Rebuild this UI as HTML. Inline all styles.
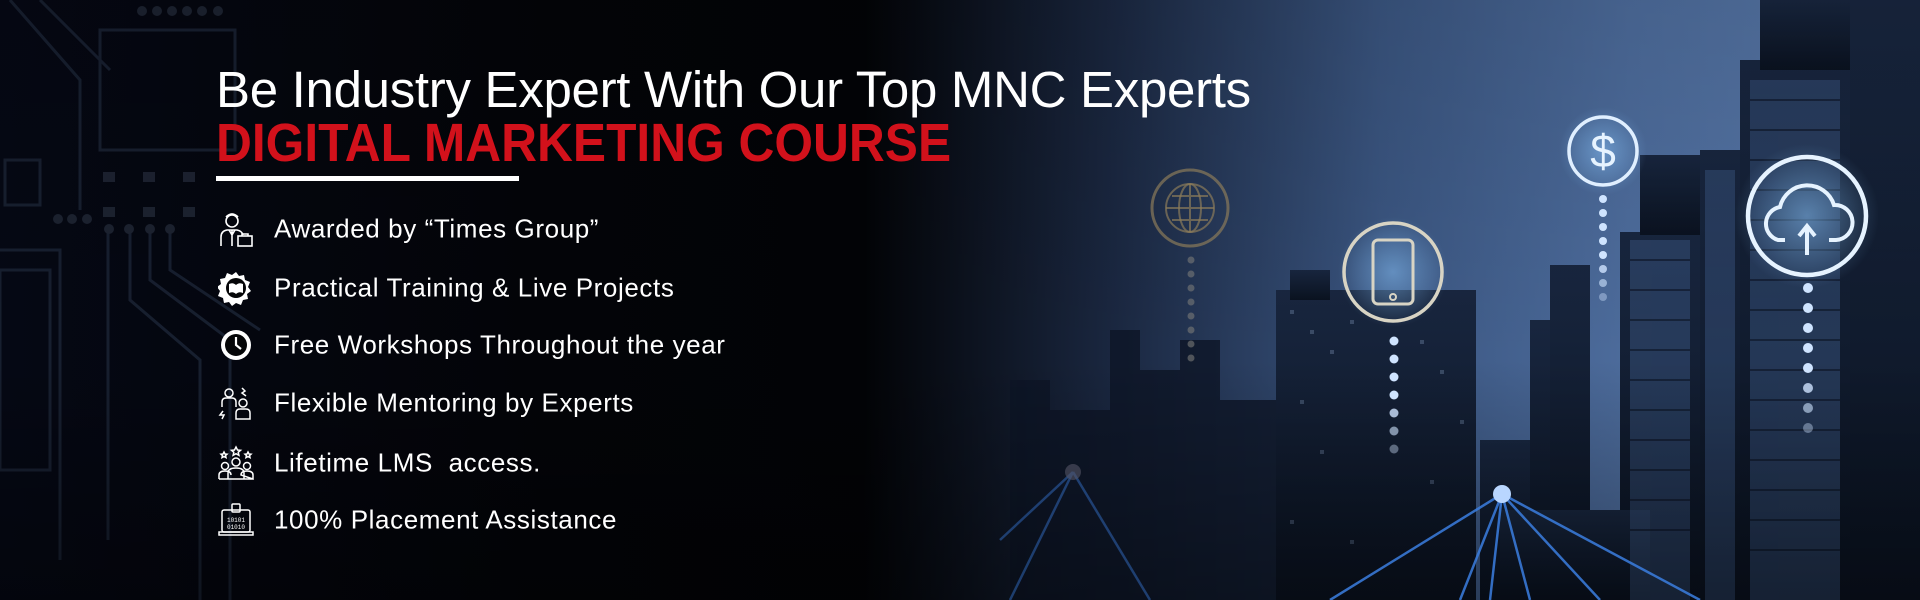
<!DOCTYPE html>
<html><head><meta charset="utf-8"><style>
*{margin:0;padding:0;box-sizing:border-box}
body{width:1920px;height:600px;overflow:hidden;background:#03050b;font-family:"Liberation Sans",sans-serif}
.wrap{position:relative;width:1920px;height:600px;overflow:hidden}
svg.bg{position:absolute;left:0;top:0}
.t1{position:absolute;left:216px;top:60px;color:#fff;font-size:51px;white-space:nowrap;letter-spacing:-0.3px}
.t2{position:absolute;left:216px;top:112px;color:#d2111b;font-size:54px;font-weight:bold;white-space:nowrap;transform:scaleX(0.92);transform-origin:left top}
.bar{position:absolute;left:216px;top:176px;width:303px;height:5px;background:#fff}
.li{position:absolute;left:274px;color:#fff;font-size:26px;white-space:nowrap;letter-spacing:0.6px;transform:translateY(-50%)}
.ic{position:absolute;left:218px;width:36px;height:36px;transform:translateY(-50%)}
</style></head><body><div class="wrap">
<svg class="bg" width="1920" height="600" viewBox="0 0 1920 600">
<defs>
<linearGradient id="sky" x1="0" y1="0" x2="1" y2="0">
<stop offset="0" stop-color="#050814"/>
<stop offset="0.28" stop-color="#030408"/>
<stop offset="0.45" stop-color="#020306"/>
<stop offset="0.58" stop-color="#1a2740"/>
<stop offset="0.72" stop-color="#3a5580"/>
<stop offset="0.85" stop-color="#4d6c9c"/>
<stop offset="1" stop-color="#5a7aaa"/>
</linearGradient>
<linearGradient id="vfade" x1="0" y1="0" x2="0" y2="1">
<stop offset="0" stop-color="#000" stop-opacity="0.1"/>
<stop offset="0.6" stop-color="#000" stop-opacity="0"/>
<stop offset="1" stop-color="#000" stop-opacity="0.35"/>
</linearGradient>
<radialGradient id="glow"><stop offset="0" stop-color="#8cc8ff" stop-opacity="0.5"/><stop offset="1" stop-color="#8cc8ff" stop-opacity="0"/></radialGradient>
<linearGradient id="bld" x1="0" y1="0" x2="0" y2="1"><stop offset="0" stop-color="#18263f"/><stop offset="1" stop-color="#0a1220"/></linearGradient>
</defs>
<rect width="1920" height="600" fill="url(#sky)"/>
<g stroke="#1a2233" stroke-width="3" fill="none" opacity="0.9">
<rect x="100" y="30" width="135" height="120"/>
<path d="M10 0 L80 80 L80 210 M40 0 L110 70 M0 250 L60 250 L60 560 M108 230 L108 540 M130 230 L130 300 L200 360 L200 600 M150 230 L150 280 L230 340 L230 600 M170 230 L170 270 L260 330"/>
<rect x="5" y="160" width="35" height="45"/>
<rect x="0" y="270" width="50" height="200"/>
</g>
<g fill="#1c2230"><rect x="103" y="172" width="12" height="10"/><rect x="143" y="172" width="12" height="10"/><rect x="183" y="172" width="12" height="10"/><rect x="103" y="207" width="12" height="10"/><rect x="143" y="207" width="12" height="10"/><rect x="183" y="207" width="12" height="10"/>
<circle cx="58" cy="219" r="5"/><circle cx="72" cy="219" r="5"/><circle cx="87" cy="219" r="5"/><circle cx="109" cy="229" r="5"/><circle cx="129" cy="229" r="5"/><circle cx="150" cy="229" r="5"/><circle cx="170" cy="229" r="5"/>
<circle cx="142" cy="11" r="5"/><circle cx="157" cy="11" r="5"/><circle cx="172" cy="11" r="5"/><circle cx="187" cy="11" r="5"/><circle cx="202" cy="11" r="5"/><circle cx="218" cy="11" r="5"/></g>
<g fill="#0d1526" opacity="0.8">
<rect x="1010" y="380" width="40" height="220"/><rect x="1050" y="410" width="60" height="190"/><rect x="1110" y="330" width="30" height="270"/>
<rect x="1140" y="370" width="40" height="230"/><rect x="1180" y="340" width="40" height="260"/><rect x="1220" y="400" width="60" height="200"/>
</g>
<g fill="url(#bld)">
<rect x="1276" y="290" width="200" height="310"/>
<rect x="1290" y="270" width="40" height="30"/>
<rect x="1480" y="440" width="60" height="160"/>
<rect x="1530" y="320" width="30" height="280"/>
<rect x="1550" y="265" width="40" height="335"/>
<rect x="1620" y="232" width="80" height="368"/>
<rect x="1640" y="155" width="60" height="80"/>
<rect x="1700" y="150" width="50" height="450"/>
<rect x="1740" y="60" width="110" height="540"/>
<rect x="1760" y="0" width="100" height="70"/>
<rect x="1850" y="0" width="70" height="600"/>
<rect x="1500" y="510" width="150" height="90"/>
</g>
<g fill="#3d5a88" opacity="0.45">
<rect x="1630" y="240" width="60" height="360"/><rect x="1750" y="80" width="90" height="520"/><rect x="1705" y="170" width="30" height="430"/>
</g>
<g fill="#7f96b8" opacity="0.35">
<rect x="1290" y="310" width="4" height="4"/><rect x="1310" y="330" width="4" height="4"/><rect x="1330" y="350" width="4" height="4"/><rect x="1350" y="320" width="4" height="4"/><rect x="1420" y="340" width="4" height="4"/><rect x="1440" y="370" width="4" height="4"/><rect x="1300" y="400" width="4" height="4"/><rect x="1460" y="420" width="4" height="4"/><rect x="1320" y="450" width="4" height="4"/><rect x="1430" y="480" width="4" height="4"/><rect x="1290" y="520" width="4" height="4"/><rect x="1350" y="540" width="4" height="4"/>
</g>
<g stroke="#0c1424" stroke-width="2" opacity="0.6">
<path d="M1750 100 H1840 M1750 130 H1840 M1750 160 H1840 M1750 190 H1840 M1750 220 H1840 M1750 250 H1840 M1750 280 H1840 M1750 310 H1840 M1750 340 H1840 M1750 370 H1840 M1750 400 H1840 M1750 430 H1840 M1750 460 H1840 M1750 490 H1840 M1750 520 H1840 M1750 550 H1840 M1630 260 H1690 M1630 290 H1690 M1630 320 H1690 M1630 350 H1690 M1630 380 H1690 M1630 410 H1690 M1630 440 H1690 M1630 470 H1690 M1630 500 H1690 M1630 530 H1690"/>
</g>
<rect width="1920" height="600" fill="url(#vfade)"/>
<g stroke="#3b7ee0" stroke-width="2.5" opacity="0.85">
<path d="M1502 494 L1330 600 M1502 494 L1460 600 M1502 494 L1490 600 M1502 494 L1530 600 M1502 494 L1600 600 M1502 494 L1700 600"/>
<path d="M1073 472 L1000 540 M1073 472 L1150 600 M1073 472 L1010 600" opacity="0.5"/>
</g>
<circle cx="1502" cy="494" r="9" fill="#b9d6ff"/>
<circle cx="1073" cy="472" r="8" fill="#556" opacity="0.6"/>
<g fill="none">
<circle cx="1190" cy="208" r="38" stroke="#8a7a5a" stroke-width="3" opacity="0.7"/>
<circle cx="1190" cy="208" r="24" stroke="#8a7a5a" stroke-width="2" opacity="0.7"/>
<path d="M1166 208 H1214 M1190 184 V232 M1172 196 H1208 M1172 220 H1208" stroke="#8a7a5a" stroke-width="2" opacity="0.7"/>
<ellipse cx="1190" cy="208" rx="11" ry="24" stroke="#8a7a5a" stroke-width="2" opacity="0.7"/>
<circle cx="1393" cy="272" r="55" fill="url(#glow)"/>
<circle cx="1393" cy="272" r="49" stroke="#d8d4c4" stroke-width="3.5"/>
<rect x="1373" y="240" width="40" height="64" rx="5" stroke="#d8d4c4" stroke-width="3"/>
<circle cx="1393" cy="297" r="3" stroke="#d8d4c4" stroke-width="2"/>
<circle cx="1603" cy="151" r="44" fill="url(#glow)"/>
<circle cx="1603" cy="151" r="34" stroke="#e0efff" stroke-width="3.5"/>
<circle cx="1807" cy="216" r="72" fill="url(#glow)"/>
<circle cx="1807" cy="216" r="59" stroke="#e6f3ff" stroke-width="4.5"/>
<path d="M1785 240 H1778 A17 17 0 0 1 1780 207 A28 28 0 0 1 1834 205 A17 17 0 0 1 1836 240 H1829" stroke="#e6f3ff" stroke-width="4"/>
<path d="M1807 255 V228 M1799 236 L1807 226 L1815 236" stroke="#e6f3ff" stroke-width="4"/>
</g>
<text x="1603" y="167" font-family="Liberation Sans" font-size="46" fill="#e6f3ff" text-anchor="middle">$</text>
<g fill="#7a7a78" opacity="0.6">
<circle cx="1191" cy="260" r="3.5"/><circle cx="1191" cy="274" r="3.5"/><circle cx="1191" cy="288" r="3.5"/><circle cx="1191" cy="302" r="3.5"/><circle cx="1191" cy="316" r="3.5"/><circle cx="1191" cy="330" r="3.5"/><circle cx="1191" cy="344" r="3.5"/><circle cx="1191" cy="358" r="3.5"/>
</g>
<g fill="#cfe4ff">
<circle cx="1394" cy="341" r="4.5"/><circle cx="1394" cy="359" r="4.5"/><circle cx="1394" cy="377" r="4.5"/><circle cx="1394" cy="395" r="4.5"/><circle cx="1394" cy="413" r="4.5" opacity="0.8"/><circle cx="1394" cy="431" r="4.5" opacity="0.6"/><circle cx="1394" cy="449" r="4.5" opacity="0.4"/>
<circle cx="1603" cy="199" r="4"/><circle cx="1603" cy="213" r="4"/><circle cx="1603" cy="227" r="4"/><circle cx="1603" cy="241" r="4"/><circle cx="1603" cy="255" r="4"/><circle cx="1603" cy="269" r="4" opacity="0.8"/><circle cx="1603" cy="283" r="4" opacity="0.6"/><circle cx="1603" cy="297" r="4" opacity="0.4"/>
<circle cx="1808" cy="288" r="5"/><circle cx="1808" cy="308" r="5"/><circle cx="1808" cy="328" r="5"/><circle cx="1808" cy="348" r="5"/><circle cx="1808" cy="368" r="5"/><circle cx="1808" cy="388" r="5" opacity="0.8"/><circle cx="1808" cy="408" r="5" opacity="0.6"/><circle cx="1808" cy="428" r="5" opacity="0.4"/>
</g>
</svg>

<div class="t1">Be Industry Expert With Our Top MNC Experts</div>
<div class="t2">DIGITAL MARKETING COURSE</div>
<div class="bar"></div>

<svg class="ic" style="top:229px" viewBox="0 0 36 36" fill="none" stroke="#fff" stroke-width="1.6"><circle cx="14" cy="10" r="6"/><path d="M8 6 Q14 0 20 6"/><path d="M3 35 V26 Q3 20 9 19 L19 19 Q24 20 25 24 M14 19 V35 M11 19 L14 24 L17 19"/><rect x="20" y="25" width="14" height="10"/><path d="M24 25 V23 H30 V25"/></svg>
<svg class="ic" style="top:288px" viewBox="0 0 36 36" fill="#fff"><path d="M18 2 l3 4 5-1 1 5 5 2-2 5 3 4-4 3 1 5-5 1-2 5-5-2-4 3-3-4-5 1-1-5-5-2 2-5-3-4 4-3-1-5 5-1 2-5 5 2z"/><circle cx="18" cy="18" r="10" fill="#050608"/><path d="M11 14 Q15 12 18 15 Q21 12 25 14 V23 Q21 21 18 24 Q15 21 11 23z" fill="#fff"/></svg>
<svg class="ic" style="top:345px" viewBox="0 0 36 36"><circle cx="18" cy="18" r="15" fill="#fff"/><circle cx="18" cy="18" r="11" fill="#050608"/><path d="M18 10 V18 L23 22" stroke="#fff" stroke-width="2.2" fill="none"/></svg>
<svg class="ic" style="top:403px" viewBox="0 0 36 36" fill="none" stroke="#fff" stroke-width="1.5"><circle cx="11" cy="8" r="4"/><path d="M4 22 V17 Q4 13 8 13 H14 Q18 13 18 17 V22"/><circle cx="25" cy="18" r="4"/><path d="M18 34 V28 Q18 24 22 24 H28 Q32 24 32 28 V34 Z"/><path d="M24 3 L27 6 L24 8 L28 11 M5 26 L2 30 L6 30 L4 34"/></svg>
<svg class="ic" style="top:463px" viewBox="0 0 36 36" fill="none" stroke="#fff" stroke-width="1.5"><path d="M18 2 l1.5 3 3 .3-2.3 2 .7 3-2.9-1.6-2.9 1.6.7-3-2.3-2 3-.3z"/><path d="M6 7 l1 2 2 .2-1.5 1.4.5 2-2-1-2 1 .5-2-1.5-1.4 2-.2z M30 7 l1 2 2 .2-1.5 1.4.5 2-2-1-2 1 .5-2-1.5-1.4 2-.2z"/><circle cx="18" cy="17" r="4"/><circle cx="7" cy="21" r="3.5"/><circle cx="29" cy="21" r="3.5"/><path d="M1 34 V30 Q1 26 7 26 Q13 26 13 30 M23 30 Q23 26 29 26 Q35 26 35 30 V34 Z M1 34 H35 M10 34 V28 Q10 23 18 23 Q26 23 26 28 V34"/></svg>
<svg class="ic" style="top:520px" viewBox="0 0 36 36" fill="none" stroke="#fff" stroke-width="1.5"><rect x="4" y="8" width="28" height="22" rx="2"/><path d="M1 30 H35 V33 H1z"/><rect x="14" y="2" width="8" height="8" rx="1"/><text x="18" y="20" font-size="6" fill="#fff" stroke="none" text-anchor="middle" font-family="Liberation Mono">10101</text><text x="18" y="27" font-size="6" fill="#fff" stroke="none" text-anchor="middle" font-family="Liberation Mono">01010</text></svg>

<div class="li" style="top:229px">Awarded by “Times Group”</div>
<div class="li" style="top:288px">Practical Training &amp; Live Projects</div>
<div class="li" style="top:345px">Free Workshops Throughout the year</div>
<div class="li" style="top:403px">Flexible Mentoring by Experts</div>
<div class="li" style="top:463px">Lifetime LMS&nbsp; access.</div>
<div class="li" style="top:520px">100% Placement Assistance</div>
</div></body></html>
